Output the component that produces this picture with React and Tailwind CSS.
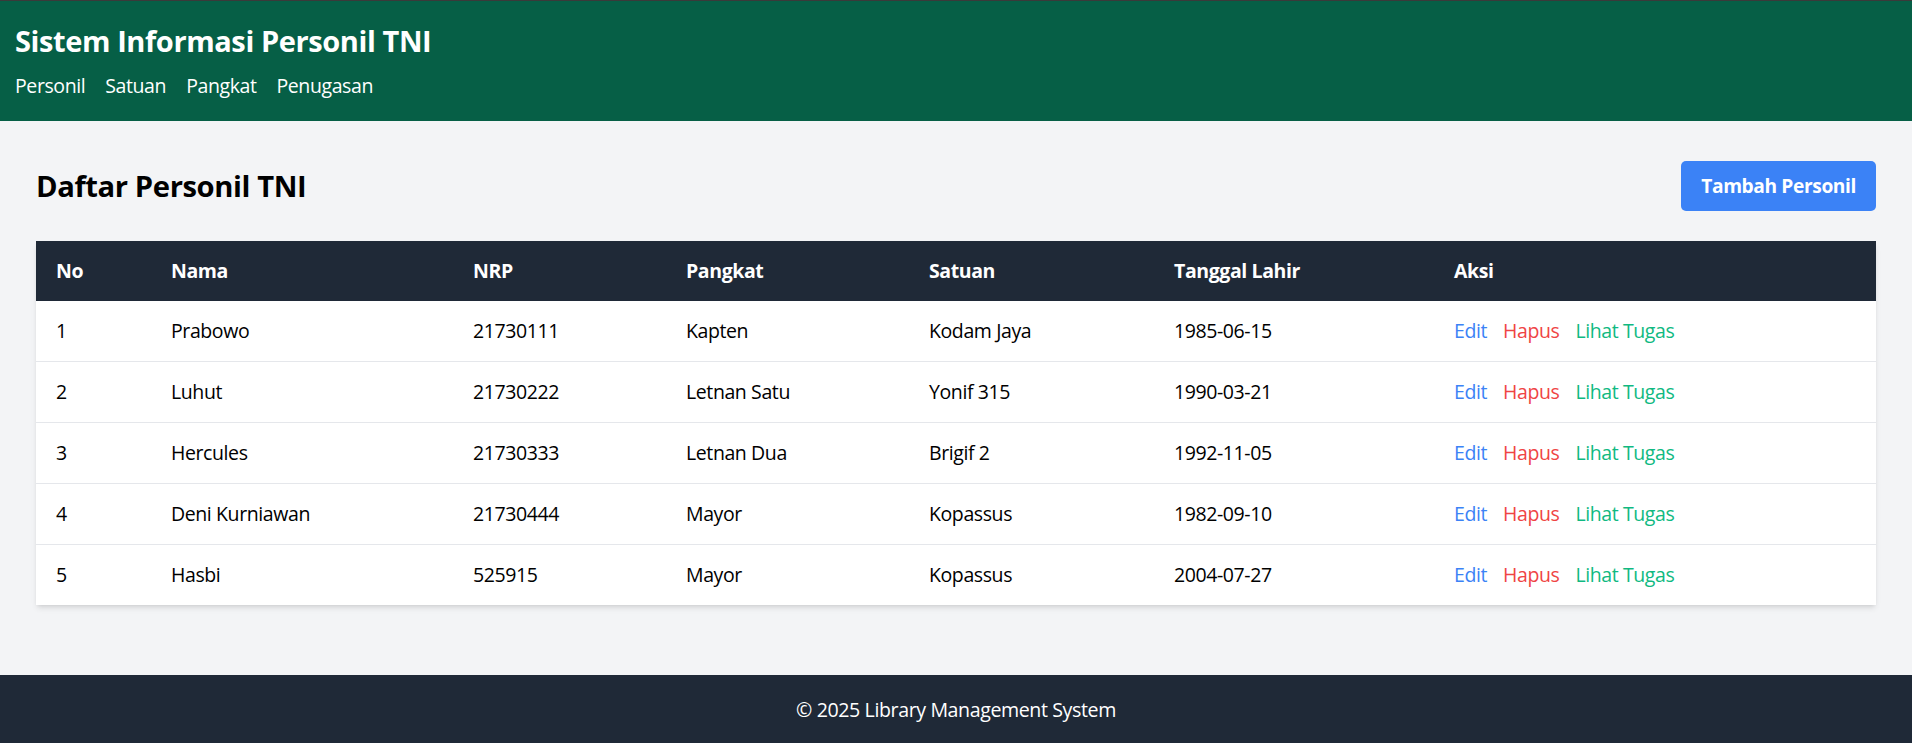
const personil = [
  { no: 1, nama: "Prabowo", nrp: "21730111", pangkat: "Kapten", satuan: "Kodam Jaya", lahir: "1985-06-15" },
  { no: 2, nama: "Luhut", nrp: "21730222", pangkat: "Letnan Satu", satuan: "Yonif 315", lahir: "1990-03-21" },
  { no: 3, nama: "Hercules", nrp: "21730333", pangkat: "Letnan Dua", satuan: "Brigif 2", lahir: "1992-11-05" },
  { no: 4, nama: "Deni Kurniawan", nrp: "21730444", pangkat: "Mayor", satuan: "Kopassus", lahir: "1982-09-10" },
  { no: 5, nama: "Hasbi", nrp: "525915", pangkat: "Mayor", satuan: "Kopassus", lahir: "2004-07-27" },
];

const navLinks = ["Personil", "Satuan", "Pangkat", "Penugasan"];

export default function App() {
  return (
    <div className="bg-[#f3f4f6] font-['Open_Sans','Noto_Sans',sans-serif] tracking-[-0.025em] text-black">
      {/* Header */}
      <header className="border-t border-[#3a3a3a] bg-[#065f46] px-[15px] py-5 text-white">
        <h1 className="mb-[10px] text-[29px] font-bold leading-[40px]">Sistem Informasi Personil TNI</h1>
        <nav className="flex gap-5 text-[19.5px] leading-[30px]">
          {navLinks.map((link) => (
            <a key={link} href="#" className="hover:underline">
              {link}
            </a>
          ))}
        </nav>
      </header>

      {/* Content */}
      <main className="px-[36px] pt-10 pb-10">
        <div className="mb-[30px] flex items-center justify-between">
          <h2 className="text-[29.2px] font-bold leading-[40px]">Daftar Personil TNI</h2>
          <button className="rounded-[5px] bg-[#3b82f6] px-5 py-[10px] text-[19.2px] font-bold leading-[30px] text-white">
            Tambah Personil
          </button>
        </div>

        <div className="bg-white shadow-[0_4px_6px_-1px_rgba(0,0,0,0.1),0_2px_4px_-2px_rgba(0,0,0,0.1)]">
          <table className="w-full table-fixed border-collapse text-left text-[19.5px] leading-[30px]">
            <thead className="bg-[#1f2937] text-white">
              <tr>
                <th className="w-[115px] px-5 py-[15px] font-bold">No</th>
                <th className="w-[302px] px-5 py-[15px] font-bold">Nama</th>
                <th className="w-[213px] px-5 py-[15px] font-bold">NRP</th>
                <th className="w-[243px] px-5 py-[15px] font-bold">Pangkat</th>
                <th className="w-[245px] px-5 py-[15px] font-bold">Satuan</th>
                <th className="w-[280px] px-5 py-[15px] font-bold">Tanggal Lahir</th>
                <th className="px-5 py-[15px] font-bold">Aksi</th>
              </tr>
            </thead>
            <tbody className="divide-y divide-[#e5e7eb]">
              {personil.map((p) => (
                <tr key={p.no}>
                  <td className="px-5 py-[15px]">{p.no}</td>
                  <td className="px-5 py-[15px]">{p.nama}</td>
                  <td className="px-5 py-[15px]">{p.nrp}</td>
                  <td className="px-5 py-[15px]">{p.pangkat}</td>
                  <td className="px-5 py-[15px]">{p.satuan}</td>
                  <td className="px-5 py-[15px]">{p.lahir}</td>
                  <td className="px-5 py-[15px]">
                    <a href="#" className="mr-[16px] text-[#3b82f6]">Edit</a>
                    <a href="#" className="mr-[16px] text-[#ef4444]">Hapus</a>
                    <a href="#" className="text-[#10b981]">Lihat Tugas</a>
                  </td>
                </tr>
              ))}
            </tbody>
          </table>
        </div>
      </main>

      {/* Footer */}
      <footer className="mt-[30px] bg-[#1f2937] py-5 text-center text-[19.6px] leading-[30px] text-white">
        © 2025 Library Management System
      </footer>
    </div>
  );
}
